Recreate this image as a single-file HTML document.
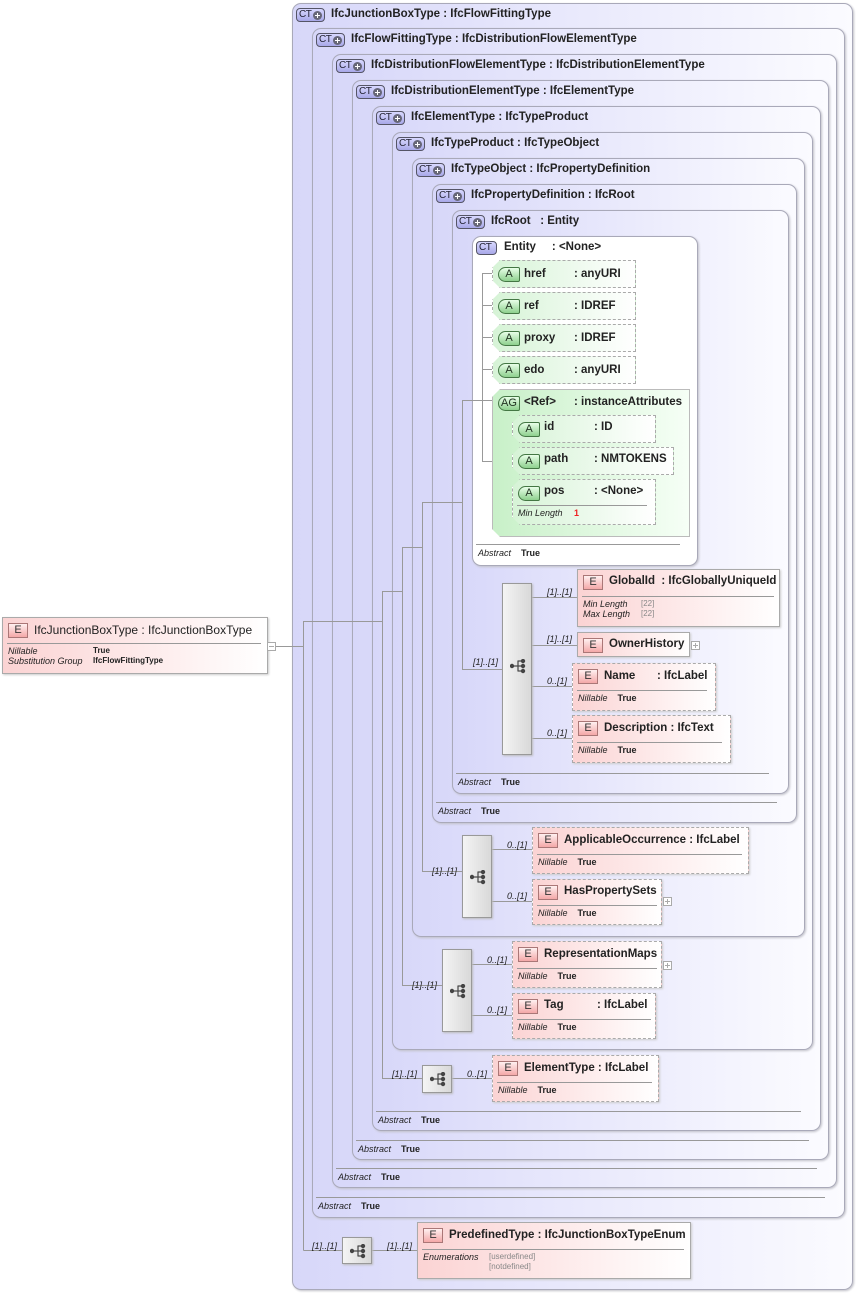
<!DOCTYPE html>
<html><head><meta charset="utf-8"><style>
*{margin:0;padding:0;box-sizing:border-box}
body{width:857px;height:1293px;background:#fff;position:relative;overflow:hidden;font-family:"Liberation Sans",sans-serif}
.b{position:absolute;border:1px solid #a9a9b9;border-radius:9px;background:linear-gradient(90deg,#d7d7f9,#fbfbff);box-shadow:1px 1px 2px #c0c0c8}
.t{position:absolute;font:bold 11.5px "Liberation Sans",sans-serif;color:#222;white-space:nowrap}
.ct{position:absolute;width:29px;height:14px;border:1px solid #556;border-radius:4px;background:linear-gradient(#d8d8ff,#a8a8e8);font:10px "Liberation Sans",sans-serif;color:#223;padding-left:2px;line-height:12px;letter-spacing:-0.5px}
.ct i{position:absolute;right:2px;top:2px;width:9px;height:9px;border-radius:50%;background:#667;}
.ct i:before{content:"";position:absolute;left:2px;top:4px;width:5px;height:1px;background:#fff}
.ct i:after{content:"";position:absolute;left:4px;top:2px;width:1px;height:5px;background:#fff}
.ab{position:absolute;font:italic 9px "Liberation Sans",sans-serif;color:#222;white-space:nowrap}
.ab b{font-style:normal;font-weight:bold;margin-left:10px}
.ln{position:absolute;height:1px;background:#999}
.e{position:absolute;border:1px dashed #aaa;background:linear-gradient(90deg,#fbd3d3,#fff);box-shadow:1px 1px 2px #ccc}
.e.s{border:1px solid #aaa}
.eb{position:absolute;left:5px;top:5px;width:20px;height:15px;border:1px solid #a77;background:linear-gradient(#fff0f0,#f4a8a8);font:11px "Liberation Sans",sans-serif;text-align:center;line-height:13px;color:#333}
.a{position:absolute;border:1px dashed #aaa;background:linear-gradient(90deg,#d6f3d6,#fff);box-shadow:1px 1px 2px #ccc;clip-path:polygon(8px 0,100% 0,100% 100%,8px 100%,0 calc(100% - 8px),0 8px)}
.ag{position:absolute;border:1px solid #bbb;background:linear-gradient(90deg,#c8f0c8,#f6fff6);box-shadow:2px 2px 2px #bbb}
.abg{position:absolute;left:5px;top:6px;width:22px;height:15px;border:1px solid #474;border-radius:8px 2px 2px 8px;background:linear-gradient(#e8ffe8,#8ed08e);font:11px "Liberation Sans",sans-serif;text-align:center;line-height:13px;color:#232}
.sq{position:absolute;border:1px solid #999;background:linear-gradient(90deg,#f4f4f4,#d8d8d8);box-shadow:1px 1px 2px #bbb}
.sq svg{position:absolute;left:7px}
.m{position:absolute;font:italic 9px "Liberation Sans",sans-serif;color:#222;white-space:nowrap}
.g{position:absolute;font:8px "Liberation Sans",sans-serif;color:#888;white-space:nowrap}
.px{position:absolute;width:9px;height:9px;border:1px solid #aaa;background:#fff}
.px:before{content:"";position:absolute;left:1px;top:3px;width:5px;height:1px;background:#aaa}
.px.p:after{content:"";position:absolute;left:3px;top:1px;width:1px;height:5px;background:#aaa}
</style></head><body>

<div class="b" style="left:292px;top:3px;width:561px;height:1287px"></div>
<div class="ct" style="left:296px;top:8px">CT<i></i></div><div class="t" style="left:331px;top:8px">IfcJunctionBoxType : IfcFlowFittingType</div>

<div class="b" style="left:312px;top:28px;width:533px;height:1190px"></div>
<div class="ct" style="left:316px;top:33px">CT<i></i></div><div class="t" style="left:351px;top:33px">IfcFlowFittingType : IfcDistributionFlowElementType</div>
<div class="ln" style="left:316px;top:1197px;width:509px"></div><div class="ab" style="left:318px;top:1201px">Abstract<b>True</b></div>

<div class="b" style="left:332px;top:54px;width:505px;height:1134px"></div>
<div class="ct" style="left:336px;top:59px">CT<i></i></div><div class="t" style="left:371px;top:59px">IfcDistributionFlowElementType : IfcDistributionElementType</div>
<div class="ln" style="left:336px;top:1168px;width:481px"></div><div class="ab" style="left:338px;top:1172px">Abstract<b>True</b></div>

<div class="b" style="left:352px;top:80px;width:477px;height:1080px"></div>
<div class="ct" style="left:356px;top:85px">CT<i></i></div><div class="t" style="left:391px;top:85px">IfcDistributionElementType : IfcElementType</div>
<div class="ln" style="left:356px;top:1140px;width:453px"></div><div class="ab" style="left:358px;top:1144px">Abstract<b>True</b></div>

<div class="b" style="left:372px;top:106px;width:449px;height:1025px"></div>
<div class="ct" style="left:376px;top:111px">CT<i></i></div><div class="t" style="left:411px;top:111px">IfcElementType : IfcTypeProduct</div>
<div class="ln" style="left:376px;top:1111px;width:425px"></div><div class="ab" style="left:378px;top:1115px">Abstract<b>True</b></div>

<div class="b" style="left:392px;top:132px;width:421px;height:918px"></div>
<div class="ct" style="left:396px;top:137px">CT<i></i></div><div class="t" style="left:431px;top:137px">IfcTypeProduct : IfcTypeObject</div>

<div class="b" style="left:412px;top:158px;width:393px;height:779px"></div>
<div class="ct" style="left:416px;top:163px">CT<i></i></div><div class="t" style="left:451px;top:163px">IfcTypeObject : IfcPropertyDefinition</div>

<div class="b" style="left:432px;top:184px;width:365px;height:639px"></div>
<div class="ct" style="left:436px;top:189px">CT<i></i></div><div class="t" style="left:471px;top:189px">IfcPropertyDefinition : IfcRoot</div>
<div class="ln" style="left:436px;top:802px;width:341px"></div><div class="ab" style="left:438px;top:806px">Abstract<b>True</b></div>

<div class="b" style="left:452px;top:210px;width:337px;height:584px"></div>
<div class="ct" style="left:456px;top:215px">CT<i></i></div><div class="t" style="left:491px;top:215px">IfcRoot &nbsp;&nbsp;: Entity</div>
<div class="ln" style="left:456px;top:773px;width:313px"></div><div class="ab" style="left:458px;top:777px">Abstract<b>True</b></div>

<div class="b" style="left:472px;top:236px;width:226px;height:330px;background:#fff"></div>
<div class="ct" style="left:476px;top:241px;width:21px">CT</div><div class="t" style="left:504px;top:241px">Entity &nbsp;&nbsp;&nbsp;&nbsp;: &lt;None&gt;</div>
<div class="ln" style="left:476px;top:544px;width:204px"></div><div class="ab" style="left:478px;top:548px">Abstract<b>True</b></div>

<svg style="position:absolute;left:0;top:0" width="857" height="1293"><g stroke="#999" stroke-width="1" fill="none" shape-rendering="crispEdges">
<polyline points="276,646.5 303.5,646.5"/>
<polyline points="303.5,1250.5 303.5,621.5 382.5,621.5"/>
<polyline points="342,1250.5 303.5,1250.5"/>
<polyline points="382.5,1078.5 382.5,591.5 402.5,591.5"/>
<line x1="382" y1="1078.5" x2="422" y2="1078.5"/>
<polyline points="402.5,985.5 402.5,547.5 422.5,547.5"/>
<line x1="402" y1="985.5" x2="442" y2="985.5"/>
<polyline points="422.5,871.5 422.5,502.5 462.5,502.5"/>
<line x1="422" y1="871.5" x2="462" y2="871.5"/>
<polyline points="462.5,669.5 462.5,400.5 482.5,400.5"/>
<line x1="462" y1="669.5" x2="502" y2="669.5"/>
<line x1="482.5" y1="273" x2="482.5" y2="462"/>
<line x1="482" y1="273.5" x2="496" y2="273.5"/>
<line x1="482" y1="305.5" x2="496" y2="305.5"/>
<line x1="482" y1="337.5" x2="496" y2="337.5"/>
<line x1="482" y1="369.5" x2="496" y2="369.5"/>
<line x1="482" y1="400.5" x2="496" y2="400.5"/>
<line x1="482" y1="461.5" x2="512" y2="461.5"/>
<line x1="502.5" y1="427" x2="502.5" y2="500"/>
<line x1="502" y1="427.5" x2="516" y2="427.5"/>
<line x1="502" y1="459.5" x2="516" y2="459.5"/>
<line x1="502" y1="491.5" x2="516" y2="491.5"/>
<line x1="531" y1="597.5" x2="577" y2="597.5"/>
<line x1="531" y1="645.5" x2="577" y2="645.5"/>
<line x1="531" y1="686.5" x2="572" y2="686.5"/>
<line x1="531" y1="738.5" x2="572" y2="738.5"/>
<line x1="492" y1="849.5" x2="532" y2="849.5"/>
<line x1="492" y1="901.5" x2="532" y2="901.5"/>
<line x1="472" y1="964.5" x2="512" y2="964.5"/>
<line x1="472" y1="1015.5" x2="512" y2="1015.5"/>
<line x1="452" y1="1078.5" x2="492" y2="1078.5"/>
<line x1="372" y1="1250.5" x2="417" y2="1250.5"/>
</g></svg>

<div class="a" style="left:492px;top:260px;width:144px;height:28px"><div class="abg">A</div><div class="t" style="left:31px;top:7px">href</div><div class="t" style="left:81px;top:7px">: anyURI</div></div>
<div class="a" style="left:492px;top:292px;width:144px;height:28px"><div class="abg">A</div><div class="t" style="left:31px;top:7px">ref</div><div class="t" style="left:81px;top:7px">: IDREF</div></div>
<div class="a" style="left:492px;top:324px;width:144px;height:28px"><div class="abg">A</div><div class="t" style="left:31px;top:7px">proxy</div><div class="t" style="left:81px;top:7px">: IDREF</div></div>
<div class="a" style="left:492px;top:356px;width:144px;height:28px"><div class="abg">A</div><div class="t" style="left:31px;top:7px">edo</div><div class="t" style="left:81px;top:7px">: anyURI</div></div>
<div class="ag" style="left:492px;top:389px;width:198px;height:148px;clip-path:polygon(8px 0,100% 0,100% 100%,8px 100%,0 calc(100% - 8px),0 8px)"><div class="abg" style="width:22px">AG</div><div class="t" style="left:31px;top:6px">&lt;Ref&gt;</div><div class="t" style="left:81px;top:6px">: instanceAttributes</div></div>
<div class="a" style="left:512px;top:415px;width:144px;height:28px"><div class="abg">A</div><div class="t" style="left:31px;top:5px">id</div><div class="t" style="left:81px;top:5px">: ID</div></div>
<div class="a" style="left:512px;top:447px;width:162px;height:28px"><div class="abg">A</div><div class="t" style="left:31px;top:5px">path</div><div class="t" style="left:81px;top:5px">: NMTOKENS</div></div>
<div class="a" style="left:512px;top:479px;width:144px;height:46px"><div class="abg">A</div><div class="t" style="left:31px;top:5px">pos</div><div class="t" style="left:81px;top:5px">: &lt;None&gt;</div><div class="ln" style="left:4px;top:25px;width:130px"></div><div class="m" style="left:5px;top:28px">Min Length</div><div class="m" style="left:61px;top:28px;color:#e22;font-style:normal;font-weight:bold">1</div></div>

<svg width="0" height="0" style="position:absolute"><defs><g id="sqi" fill="#444" stroke="#444" stroke-width="1.2"><circle cx="2" cy="7" r="2.2" stroke="none"/><line x1="2" y1="7" x2="8" y2="7"/><line x1="8" y1="1.5" x2="8" y2="12.5"/><line x1="8" y1="2" x2="12" y2="2"/><line x1="8" y1="7" x2="12" y2="7"/><line x1="8" y1="12" x2="12" y2="12"/><circle cx="13" cy="2" r="2.2" stroke="none"/><circle cx="13" cy="7" r="2.2" stroke="none"/><circle cx="13" cy="12" r="2.2" stroke="none"/></g></defs></svg>
<div class="sq" style="left:502px;top:583px;width:30px;height:172px"><svg style="top:75px" width="16" height="15"><use href="#sqi"/></svg></div>
<div class="sq" style="left:462px;top:835px;width:30px;height:83px"><svg style="top:34px" width="16" height="15"><use href="#sqi"/></svg></div>
<div class="sq" style="left:442px;top:949px;width:30px;height:83px"><svg style="top:34px" width="16" height="15"><use href="#sqi"/></svg></div>
<div class="sq" style="left:422px;top:1065px;width:30px;height:28px"><svg style="top:6px" width="16" height="15"><use href="#sqi"/></svg></div>
<div class="sq" style="left:342px;top:1237px;width:30px;height:27px"><svg style="top:6px" width="16" height="15"><use href="#sqi"/></svg></div>

<div class="m" style="left:473px;top:657px">[1]..[1]</div>
<div class="m" style="left:547px;top:587px">[1]..[1]</div>
<div class="m" style="left:547px;top:634px">[1]..[1]</div>
<div class="m" style="left:547px;top:676px">0..[1]</div>
<div class="m" style="left:547px;top:728px">0..[1]</div>
<div class="m" style="left:432px;top:866px">[1]..[1]</div>
<div class="m" style="left:507px;top:840px">0..[1]</div>
<div class="m" style="left:507px;top:891px">0..[1]</div>
<div class="m" style="left:412px;top:980px">[1]..[1]</div>
<div class="m" style="left:487px;top:955px">0..[1]</div>
<div class="m" style="left:487px;top:1005px">0..[1]</div>
<div class="m" style="left:392px;top:1069px">[1]..[1]</div>
<div class="m" style="left:467px;top:1069px">0..[1]</div>
<div class="m" style="left:312px;top:1241px">[1]..[1]</div>
<div class="m" style="left:387px;top:1241px">[1]..[1]</div>

<div class="e s" style="left:577px;top:569px;width:203px;height:58px"><div class="eb">E</div><div class="t" style="left:31px;top:5px">GlobalId &nbsp;: IfcGloballyUniqueId</div><div class="ln" style="left:4px;top:26px;width:192px"></div><div class="m" style="left:5px;top:29px">Min Length</div><div class="g" style="left:63px;top:29px">[22]</div><div class="m" style="left:5px;top:39px">Max Length</div><div class="g" style="left:63px;top:39px">[22]</div></div>
<div class="e s" style="left:577px;top:632px;width:113px;height:25px"><div class="eb">E</div><div class="t" style="left:31px;top:5px">OwnerHistory</div></div><div class="px p" style="left:691px;top:641px"></div>
<div class="e" style="left:572px;top:663px;width:144px;height:48px"><div class="eb">E</div><div class="t" style="left:31px;top:6px">Name</div><div class="t" style="left:84px;top:6px">: IfcLabel</div><div class="ln" style="left:4px;top:26px;width:130px"></div><div class="m" style="left:5px;top:29px">Nillable<b style="font-style:normal;margin-left:10px">True</b></div></div>
<div class="e" style="left:572px;top:715px;width:159px;height:48px"><div class="eb">E</div><div class="t" style="left:31px;top:6px">Description : IfcText</div><div class="ln" style="left:4px;top:26px;width:145px"></div><div class="m" style="left:5px;top:29px">Nillable<b style="font-style:normal;margin-left:10px">True</b></div></div>

<div class="e" style="left:532px;top:827px;width:217px;height:47px"><div class="eb">E</div><div class="t" style="left:31px;top:6px">ApplicableOccurrence : IfcLabel</div><div class="ln" style="left:4px;top:26px;width:205px"></div><div class="m" style="left:5px;top:29px">Nillable<b style="font-style:normal;margin-left:10px">True</b></div></div>
<div class="e" style="left:532px;top:879px;width:130px;height:46px"><div class="eb">E</div><div class="t" style="left:31px;top:5px">HasPropertySets</div><div class="ln" style="left:4px;top:25px;width:120px"></div><div class="m" style="left:5px;top:28px">Nillable<b style="font-style:normal;margin-left:10px">True</b></div></div><div class="px p" style="left:663px;top:897px"></div>

<div class="e" style="left:512px;top:941px;width:150px;height:47px"><div class="eb">E</div><div class="t" style="left:31px;top:6px">RepresentationMaps</div><div class="ln" style="left:4px;top:26px;width:140px"></div><div class="m" style="left:5px;top:29px">Nillable<b style="font-style:normal;margin-left:10px">True</b></div></div><div class="px p" style="left:663px;top:961px"></div>
<div class="e" style="left:512px;top:993px;width:144px;height:46px"><div class="eb">E</div><div class="t" style="left:31px;top:5px">Tag</div><div class="t" style="left:84px;top:5px">: IfcLabel</div><div class="ln" style="left:4px;top:25px;width:134px"></div><div class="m" style="left:5px;top:28px">Nillable<b style="font-style:normal;margin-left:10px">True</b></div></div>

<div class="e" style="left:492px;top:1055px;width:167px;height:47px"><div class="eb">E</div><div class="t" style="left:31px;top:6px">ElementType : IfcLabel</div><div class="ln" style="left:4px;top:26px;width:155px"></div><div class="m" style="left:5px;top:29px">Nillable<b style="font-style:normal;margin-left:10px">True</b></div></div>

<div class="e s" style="left:417px;top:1222px;width:274px;height:57px"><div class="eb">E</div><div class="t" style="left:31px;top:6px">PredefinedType : IfcJunctionBoxTypeEnum</div><div class="ln" style="left:4px;top:26px;width:262px"></div><div class="m" style="left:5px;top:29px">Enumerations</div><div class="g" style="left:71px;top:29px">[userdefined]</div><div class="g" style="left:71px;top:39px">[notdefined]</div></div>

<div class="e s" style="left:2px;top:617px;width:266px;height:57px"><div class="eb">E</div><div class="t" style="left:31px;top:5px;font-weight:normal;font-size:12px">IfcJunctionBoxType : IfcJunctionBoxType</div><div class="ln" style="left:4px;top:25px;width:254px"></div><div class="m" style="left:5px;top:28px">Nillable</div><div class="m" style="left:90px;top:28px;font-style:normal;font-weight:bold;font-size:8px">True</div><div class="m" style="left:5px;top:38px">Substitution Group</div><div class="m" style="left:90px;top:38px;font-style:normal;font-weight:bold;font-size:8px">IfcFlowFittingType</div></div>
<div class="px" style="left:267px;top:642px"></div>
</body></html>
